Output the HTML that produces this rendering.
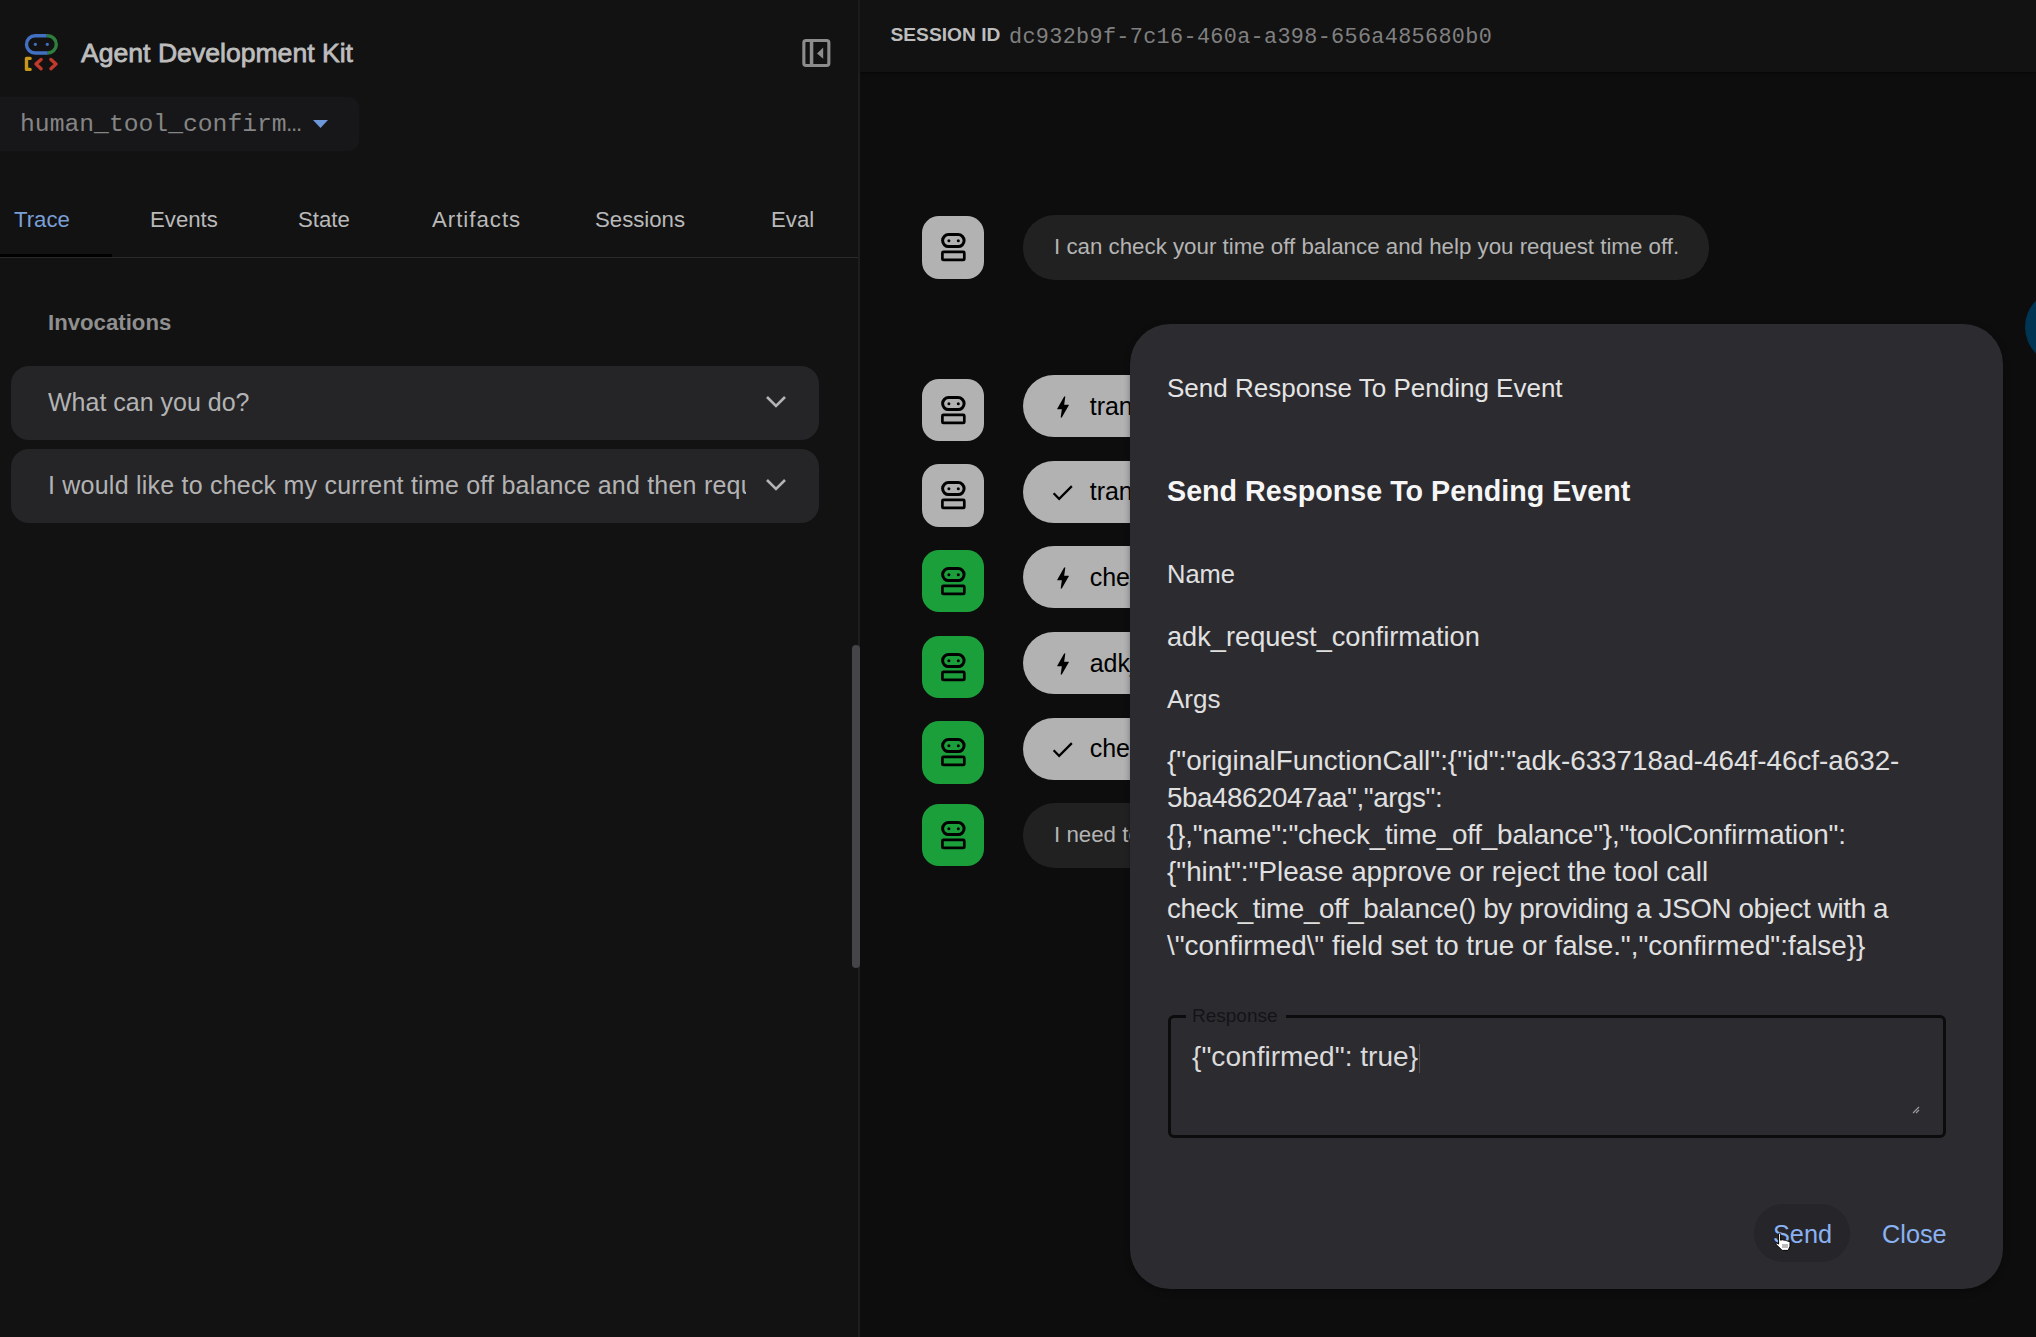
<!DOCTYPE html>
<html><head><meta charset="utf-8">
<style>
*{box-sizing:border-box;margin:0;padding:0}
html,body{width:2036px;height:1337px;overflow:hidden;background:#0e0e0f;font-family:"Liberation Sans",sans-serif}
.abs{position:absolute}
#side{position:absolute;left:0;top:0;width:858px;height:1337px;background:#121213}
#divider{position:absolute;left:857.5px;top:0;width:3px;height:1337px;background:#1e1e1f}
#main{position:absolute;left:860px;top:0;width:1176px;height:1337px;background:#0d0d0e}
#hdr{position:absolute;left:0;top:0;width:1176px;height:72px;background:#121213;box-shadow:0 1px 2px rgba(0,0,0,0.5)}
.title{position:absolute;left:81px;top:38px;font-size:26.6px;color:#bdbdbd;white-space:nowrap;-webkit-text-stroke:0.8px #bdbdbd}
.sel{position:absolute;left:0;top:97px;width:359px;height:54px;background:#171719;border-radius:0 10px 10px 0}
.sel span{position:absolute;left:20px;top:13px;font-family:"Liberation Mono",monospace;font-size:24.7px;color:#858585;white-space:nowrap}
.tab{position:absolute;top:207px;font-size:22.2px;color:#b9b9b9;white-space:nowrap}
.inv{position:absolute;left:48px;top:310px;font-size:22.2px;font-weight:bold;color:#8f8f8f}
.item{position:absolute;left:11px;width:808px;height:74px;background:#252528;border-radius:18px}
.item span{position:absolute;left:37px;top:22px;font-size:25px;color:#b3b3b3;white-space:nowrap;overflow:hidden}
.chev{position:absolute;left:754px;top:29px}
.av{position:absolute;left:61.5px;width:62.5px;height:62.5px;border-radius:17px;background:#b2b2b2}
.av.g{background:#1b9f3a}
.av svg{position:absolute;left:0;top:0}
.bub{position:absolute;left:163px;border-radius:32px;background:#b2b2b2}
.bub.d{background:#212121}
.bub span{position:absolute;white-space:nowrap}
#dlg{position:absolute;left:1130px;top:323.5px;width:872.5px;height:965px;background:#2c2b30;border-radius:40px;color:#e8e8e8;box-shadow:0 2px 6px rgba(0,0,0,0.35)}
#dlg .t{position:absolute;left:37px;white-space:nowrap}
</style></head><body>
<div id="side">
  <svg class="abs" style="left:22px;top:33px" width="40" height="42" viewBox="0 0 40 42">
    <path d="M24.8 2.8 H13.125 A8.625 8.625 0 0 0 13.125 20.05 H25.8" fill="none" stroke="#4270c2" stroke-width="3.4"/>
    <path d="M24.8 2.8 H25.675 A8.625 8.625 0 0 1 25.675 20.05 H25.8" fill="none" stroke="#2e7f3e" stroke-width="3.4"/>
    <circle cx="13.4" cy="11.3" r="1.6" fill="#4270c2"/><circle cx="25.3" cy="11.3" r="1.6" fill="#4270c2"/>
    <path d="M8.1 25.4 H4.5 V36.4 H8.1" fill="none" stroke="#c8961a" stroke-width="3.4" stroke-linecap="round" stroke-linejoin="round"/>
    <path d="M19.1 26.5 L14 31.1 L19.1 35.7" fill="none" stroke="#c0392b" stroke-width="3.4" stroke-linecap="round" stroke-linejoin="round"/>
    <path d="M28.9 26.5 L34 31.1 L28.9 35.7" fill="none" stroke="#c0392b" stroke-width="3.4" stroke-linecap="round" stroke-linejoin="round"/>
  </svg>
  <div class="title">Agent Development Kit</div>
  <svg class="abs" style="left:801px;top:38px" width="31" height="31" viewBox="0 0 31 31">
    <rect x="2.85" y="2.45" width="25" height="25" rx="2.2" fill="none" stroke="#8c8c8c" stroke-width="3.1"/>
    <rect x="8.8" y="1" width="3.5" height="28" fill="#8c8c8c"/>
    <path d="M16 15.4 L22.2 9.4 L22.2 20.7 Z" fill="#8c8c8c"/>
  </svg>
  <div class="sel"><span>human_tool_confirm…</span>
    <svg class="abs" style="left:313px;top:23px" width="15" height="8" viewBox="0 0 15 8"><path d="M0 0 H15 L7.5 8 Z" fill="#6d97d8"/></svg>
  </div>
  <div class="tab" style="left:14px;color:#7a9fd6">Trace</div>
  <div class="tab" style="left:150px">Events</div>
  <div class="tab" style="left:298px">State</div>
  <div class="tab" style="left:432px;letter-spacing:1px">Artifacts</div>
  <div class="tab" style="left:595px">Sessions</div>
  <div class="tab" style="left:771px">Eval</div>
  <div class="abs" style="left:0;top:257px;width:858px;height:1px;background:#2a2a2c"></div>
  <div class="abs" style="left:0;top:254px;width:112px;height:3px;background:#000"></div>
  <div class="inv">Invocations</div>
  <div class="item" style="top:366px"><span>What can you do?</span>
    <svg class="chev" width="22" height="14" viewBox="0 0 22 14"><path d="M2 2 L11 11 L20 2" fill="none" stroke="#b4b4b4" stroke-width="2.6"/></svg></div>
  <div class="item" style="top:449px"><span style="width:698px;letter-spacing:0.22px">I would like to check my current time off balance and then request time off</span>
    <svg class="chev" width="22" height="14" viewBox="0 0 22 14"><path d="M2 2 L11 11 L20 2" fill="none" stroke="#b4b4b4" stroke-width="2.6"/></svg></div>
</div>
<div id="divider"></div>
<div class="abs" style="left:851.5px;top:644.5px;width:8px;height:323.7px;background:#454449;border-radius:4px;z-index:2"></div>
<div id="main">
  <div id="hdr">
    <div class="abs" style="left:30.5px;top:24px;font-size:19.2px;font-weight:bold;color:#bdbdbd;letter-spacing:0px;white-space:nowrap">SESSION ID</div>
    <div class="abs" style="left:149px;top:24.5px;font-family:'Liberation Mono',monospace;font-size:21.8px;letter-spacing:0.34px;color:#808080;white-space:nowrap">dc932b9f-7c16-460a-a398-656a485680b0</div>
  </div>
  <div class="av " style="top:216.3px"><svg width="63" height="63" viewBox="0 0 63 63"><rect x="20.6" y="18.6" width="21.5" height="12" rx="6" fill="none" stroke="#000" stroke-width="3"/><circle cx="26.9" cy="24.8" r="1.5" fill="#000"/><circle cx="36.3" cy="24.8" r="1.5" fill="#000"/><rect x="20.4" y="35.9" width="21.9" height="8" rx="1" fill="none" stroke="#000" stroke-width="2.7"/></svg></div>
  <div class="bub d" style="top:215px;height:65px;width:686px"><span style="left:31px;top:19px;color:#b4b4b4;font-size:22.3px">I can check your time off balance and help you request time off.</span></div>
  <div class="av " style="top:378.6px"><svg width="63" height="63" viewBox="0 0 63 63"><rect x="20.6" y="18.6" width="21.5" height="12" rx="6" fill="none" stroke="#000" stroke-width="3"/><circle cx="26.9" cy="24.8" r="1.5" fill="#000"/><circle cx="36.3" cy="24.8" r="1.5" fill="#000"/><rect x="20.4" y="35.9" width="21.9" height="8" rx="1" fill="none" stroke="#000" stroke-width="2.7"/></svg></div>
  <div class="bub " style="top:375px;height:62px;width:400px"><svg class="abs" style="left:25.6px;top:17.5px" width="28" height="28" viewBox="0 0 24 24"><path d="M11 21h-1l1-7H7.5c-.58 0-.57-.32-.38-.66.19-.34.05-.08.07-.12C8.48 10.94 10.42 7.54 13 3h1l-1 7h3.5c.49 0 .56.33.47.51l-.07.15C12.96 17.55 11 21 11 21z" fill="#000"/></svg><span style="left:66.7px;top:16.5px;color:#000;font-size:25px">transfer_to_agent</span></div>
  <div class="av " style="top:464px"><svg width="63" height="63" viewBox="0 0 63 63"><rect x="20.6" y="18.6" width="21.5" height="12" rx="6" fill="none" stroke="#000" stroke-width="3"/><circle cx="26.9" cy="24.8" r="1.5" fill="#000"/><circle cx="36.3" cy="24.8" r="1.5" fill="#000"/><rect x="20.4" y="35.9" width="21.9" height="8" rx="1" fill="none" stroke="#000" stroke-width="2.7"/></svg></div>
  <div class="bub " style="top:460.7px;height:62px;width:400px"><svg class="abs" style="left:26.2px;top:18.2px" width="27" height="27" viewBox="0 0 24 24"><path d="M9 16.17L4.83 12l-1.42 1.41L9 19 21 7l-1.41-1.41z" fill="#000"/></svg><span style="left:66.7px;top:16.5px;color:#000;font-size:25px">transfer_to_agent</span></div>
  <div class="av g" style="top:549.6px"><svg width="63" height="63" viewBox="0 0 63 63"><rect x="20.6" y="18.6" width="21.5" height="12" rx="6" fill="none" stroke="#000" stroke-width="3"/><circle cx="26.9" cy="24.8" r="1.5" fill="#000"/><circle cx="36.3" cy="24.8" r="1.5" fill="#000"/><rect x="20.4" y="35.9" width="21.9" height="8" rx="1" fill="none" stroke="#000" stroke-width="2.7"/></svg></div>
  <div class="bub " style="top:546.3px;height:62px;width:400px"><svg class="abs" style="left:25.6px;top:17.5px" width="28" height="28" viewBox="0 0 24 24"><path d="M11 21h-1l1-7H7.5c-.58 0-.57-.32-.38-.66.19-.34.05-.08.07-.12C8.48 10.94 10.42 7.54 13 3h1l-1 7h3.5c.49 0 .56.33.47.51l-.07.15C12.96 17.55 11 21 11 21z" fill="#000"/></svg><span style="left:66.7px;top:16.5px;color:#000;font-size:25px">check_time_off_balance</span></div>
  <div class="av g" style="top:635.6px"><svg width="63" height="63" viewBox="0 0 63 63"><rect x="20.6" y="18.6" width="21.5" height="12" rx="6" fill="none" stroke="#000" stroke-width="3"/><circle cx="26.9" cy="24.8" r="1.5" fill="#000"/><circle cx="36.3" cy="24.8" r="1.5" fill="#000"/><rect x="20.4" y="35.9" width="21.9" height="8" rx="1" fill="none" stroke="#000" stroke-width="2.7"/></svg></div>
  <div class="bub " style="top:632px;height:62px;width:400px"><svg class="abs" style="left:25.6px;top:17.5px" width="28" height="28" viewBox="0 0 24 24"><path d="M11 21h-1l1-7H7.5c-.58 0-.57-.32-.38-.66.19-.34.05-.08.07-.12C8.48 10.94 10.42 7.54 13 3h1l-1 7h3.5c.49 0 .56.33.47.51l-.07.15C12.96 17.55 11 21 11 21z" fill="#000"/></svg><span style="left:66.7px;top:16.5px;color:#000;font-size:25px">adk_request_confirmation</span></div>
  <div class="av g" style="top:721px"><svg width="63" height="63" viewBox="0 0 63 63"><rect x="20.6" y="18.6" width="21.5" height="12" rx="6" fill="none" stroke="#000" stroke-width="3"/><circle cx="26.9" cy="24.8" r="1.5" fill="#000"/><circle cx="36.3" cy="24.8" r="1.5" fill="#000"/><rect x="20.4" y="35.9" width="21.9" height="8" rx="1" fill="none" stroke="#000" stroke-width="2.7"/></svg></div>
  <div class="bub " style="top:717.8px;height:62px;width:400px"><svg class="abs" style="left:26.2px;top:18.2px" width="27" height="27" viewBox="0 0 24 24"><path d="M9 16.17L4.83 12l-1.42 1.41L9 19 21 7l-1.41-1.41z" fill="#000"/></svg><span style="left:66.7px;top:16.5px;color:#000;font-size:25px">check_time_off_balance</span></div>
  <div class="av g" style="top:803.8px"><svg width="63" height="63" viewBox="0 0 63 63"><rect x="20.6" y="18.6" width="21.5" height="12" rx="6" fill="none" stroke="#000" stroke-width="3"/><circle cx="26.9" cy="24.8" r="1.5" fill="#000"/><circle cx="36.3" cy="24.8" r="1.5" fill="#000"/><rect x="20.4" y="35.9" width="21.9" height="8" rx="1" fill="none" stroke="#000" stroke-width="2.7"/></svg></div>
  <div class="bub d" style="top:802.8px;height:65px;width:500px"><span style="left:31px;top:19px;color:#b4b4b4;font-size:22.3px">I need to confirm before checking your balance.</span></div>
  <div class="abs" style="left:1165px;top:290px;width:74px;height:74px;border-radius:50%;background:#003453"></div>
</div>
<div id="dlg">
  <div class="t" style="top:49.5px;font-size:26px;color:#e4e4e4">Send Response To Pending Event</div>
  <div class="t" style="top:151px;font-size:28.7px;font-weight:bold;color:#f6f6f6">Send Response To Pending Event</div>
  <div class="t" style="top:236px;font-size:25.5px;color:#e0e0e0">Name</div>
  <div class="t" style="top:297px;font-size:27.2px;color:#e0e0e0">adk_request_confirmation</div>
  <div class="t" style="top:360px;font-size:26px;color:#e0e0e0">Args</div>
  <div class="t" style="top:418px;font-size:27.8px;line-height:37px;color:#e0e0e0">{"originalFunctionCall":{"id":"adk-633718ad-464f-46cf-a632-<br><span style="letter-spacing:-0.45px">5ba4862047aa","args":</span><br><span style="letter-spacing:-0.19px">{},"name":"check_time_off_balance"},"toolConfirmation":</span><br>{"hint":"Please approve or reject the tool call<br><span style="letter-spacing:-0.37px">check_time_off_balance() by providing a JSON object with a</span><br>\"confirmed\" field set to true or false.","confirmed":false}}</div>
  <div class="abs" style="left:37.5px;top:691px;width:778px;height:123px;border:3px solid #0c0c0d;border-radius:6px"></div>
  <div class="abs" style="left:55.5px;top:688px;width:100.5px;height:10px;background:#2c2b30"></div>
  <div class="t" style="left:62px;top:681px;font-size:19px;color:#141416">Response</div>
  <div class="t" style="left:62px;top:717px;font-size:28.1px;color:#dadada">{"confirmed": true}</div>
  <div class="abs" style="left:289px;top:720px;width:1.2px;height:29px;background:#505052"></div>
  <svg class="abs" style="left:782px;top:782px" width="8" height="8" viewBox="0 0 8 8"><path d="M1 7 L7 1 M4 7 L7 4" stroke="#9a9a9a" stroke-width="1.2"/></svg>
  <div class="abs" style="left:624px;top:880px;width:96px;height:58px;border-radius:29px;background:#262529"></div>
  <div class="t" style="left:643px;top:896px;font-size:25.3px;color:#8ab2f2">Send</div>
  <div class="t" style="left:752px;top:896px;font-size:25.3px;color:#8ab2f2">Close</div>
  <svg class="abs" style="left:644px;top:908px" width="20" height="21" viewBox="0 0 20 21"><path d="M4.6 1.6 C5.4 0.9 6.6 1.3 6.6 2.4 V8.2 L8.2 7.7 L9.7 8.1 L11.2 8.2 L12.6 8.7 L13.6 9.1 L16 9.6 V14.2 L14.2 18.4 H8.2 L2.2 12.6 C1.6 11.8 2.3 10.8 3.1 11.2 L4.6 12.1 Z" fill="#fff" stroke="#000" stroke-width="1"/><path d="M9 12 V16 M11 12 V16 M13 12 V16" stroke="#555" stroke-width="0.8"/></svg>
</div>
</body></html>
